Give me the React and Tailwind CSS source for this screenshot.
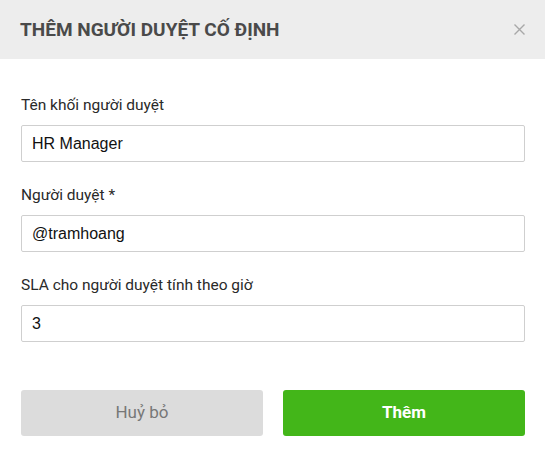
export default function App() {
  const fields = [
    { label: "Tên khối người duyệt", value: "HR Manager" },
    { label: "Người duyệt *", value: "@tramhoang" },
    { label: "SLA cho người duyệt tính theo giờ", value: "3" },
  ];

  return (
    <div className="w-[545px] h-[461px] bg-white font-['Roboto',sans-serif]">
      <div className="h-[59px] bg-[#ededed] flex items-center justify-between pl-[20px] pr-[20px]">
        <h2 className="text-[19px] font-bold text-[#4a4a4a] leading-none">
          THÊM NGƯỜI DUYỆT CỐ ĐỊNH
        </h2>
        <button type="button" className="w-[12px] h-[12px] flex items-center justify-center text-[#a8a8a8]">
          <svg width="11" height="11" viewBox="0 0 11 11" fill="none" stroke="currentColor" strokeWidth="1.4">
            <path d="M0.5 0.5L10.5 10.5M10.5 0.5L0.5 10.5" />
          </svg>
        </button>
      </div>

      <div className="pl-[21px] pr-[20px] pt-[36px]">
        {fields.map((f, i) => (
          <div key={f.label} className={i > 0 ? "mt-[23px]" : ""}>
            <label className="block text-[15.5px] leading-[20px] text-[#2a2a2a] mb-[10px]">
              {f.label}
            </label>
            <input
              type="text"
              defaultValue={f.value}
              className="w-full h-[37px] px-[10px] border border-[#cfcfcf] rounded-[2px] text-[16px] text-[#111] font-['Liberation_Sans',Arial,sans-serif] outline-none"
            />
          </div>
        ))}

        <div className="mt-[48px] flex gap-[20px]">
          <button
            type="button"
            className="flex-1 h-[46px] rounded-[3px] bg-[#dcdcdc] text-[#777] text-[17px]"
          >
            Huỷ bỏ
          </button>
          <button
            type="button"
            className="flex-1 h-[46px] rounded-[3px] bg-[#43b619] text-white text-[17px] font-bold"
          >
            Thêm
          </button>
        </div>
      </div>
    </div>
  );
}
